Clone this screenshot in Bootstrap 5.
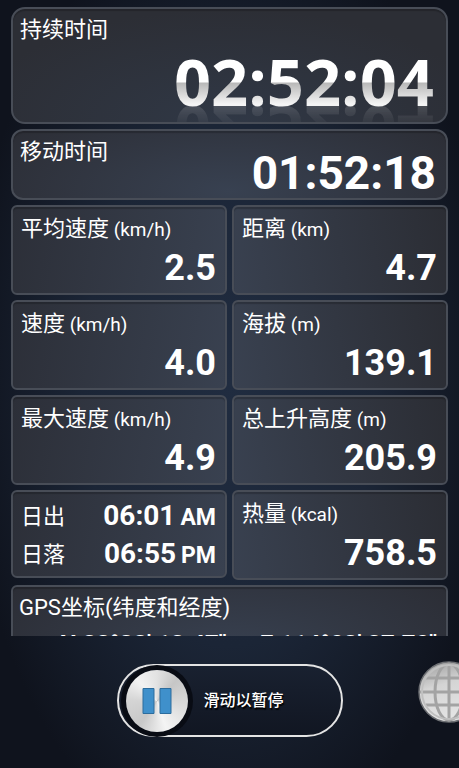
<!DOCTYPE html>
<html lang="zh-CN">
<head>
<meta charset="utf-8">
<meta name="viewport" content="width=device-width, initial-scale=1">
<title>运动记录</title>
<link href="https://cdn.jsdelivr.net/npm/bootstrap@5.3.0/dist/css/bootstrap.min.css" rel="stylesheet">
<style>
body{background:radial-gradient(ellipse 58% 62% at 50% 50%,#202c40 0,#1b2536 55%,#0f131d 100%) #0f131d;color:#fff;font-family:Roboto,"Noto Sans CJK SC",sans-serif}
.readouts{min-height:0;padding:7px 11px 0}
.stats{display:grid;gap:5px;grid-template-columns:1fr 1fr}
.span-all{grid-column:1/-1}
.tile{border:2px solid #484d57;border-radius:6px;background:linear-gradient(100deg,#2c2f38,#394150);box-shadow:inset 0 2px 1px #0003}
.tile-end{background:linear-gradient(260deg,#2b2d34,#394150)}
.tile-wide{background:radial-gradient(ellipse 60% 150% at 50% 90%,#384151,#2c2e36)}
.tile-total{height:117px;border-radius:14px;padding:4px 12px 0 7px;background:radial-gradient(ellipse 60% 100% at 50% 100%,#303846,#2c2e35)}
.tile-moving{min-height:71px;border-radius:12px;padding:4px 10px 0 7px}
.tile-stat{min-height:90px;padding:5px 9px 0 8px}
.tile-sun{height:88px;padding:5px 9px 0 8px}
.tile-gps{padding:4px 6px}
.label{font-size:22px;line-height:33px;white-space:nowrap}
.unit{font-size:19px}
.value{font-size:36px;line-height:44px;font-weight:700;text-align:right}
.moving{font-size:46px;line-height:50px;font-weight:700;padding-top:13px}
.clock{font-family:"Open Sans","Noto Sans",sans-serif;font-size:65px;line-height:75px;font-weight:700;background:linear-gradient(#fff 0,#fff 38px,#b8b8b8 39px,#f4f4f4 60px);-webkit-background-clip:text;background-clip:text;color:transparent;-webkit-box-reflect:below -26px linear-gradient(transparent 50%,#ffffff24 82%)}
.clock-line{margin-top:-2px}
.sun{font-size:28px;line-height:38px;font-weight:700;white-space:nowrap}
.sun-row{height:38px}
.ampm{font-size:23px;line-height:1;margin-left:5px}
.coords{font-size:24px;line-height:28px;font-weight:700;white-space:nowrap;padding:6px 3px 0 0}
footer{min-height:132px;padding-top:28px}
.slider{width:226px;height:73px;padding:0 0 0 7px;border:2px solid #e4e4e4;border-radius:37px;color:#fff;background:linear-gradient(#192130,#111622);font-size:16px;font-weight:500;text-shadow:1px 2px 1px #000}
.knob{width:62px;height:62px;margin-right:16px;border-radius:50%;box-shadow:0 0 0 5px #090c14;background:conic-gradient(#e2e2e2,#c6c6c6 12%,#dedede 30%,#f4f4f4 45%,#c8c8c8 60%,#d4d4d4 75%,#f2f2f2 88%,#e2e2e2)}
.globe{width:64px;height:64px;right:-22px;top:24px}
</style>
</head>
<body class="vh-100 overflow-hidden d-flex flex-column">
<main class="readouts flex-fill overflow-hidden">
<div class="stats">
<section class="tile span-all tile-total overflow-hidden"><div class="label">持续时间</div><div class="clock-line d-flex justify-content-end"><div class="clock">02:52:04</div></div></section>
<section class="tile span-all tile-wide tile-moving d-flex justify-content-between"><div class="label">移动时间</div><div class="moving">01:52:18</div></section>
<section class="tile tile-stat"><div class="label">平均速度<span class="unit"> (km/h)</span></div><div class="value">2.5</div></section>
<section class="tile tile-end tile-stat"><div class="label">距离<span class="unit"> (km)</span></div><div class="value">4.7</div></section>
<section class="tile tile-stat"><div class="label">速度<span class="unit"> (km/h)</span></div><div class="value">4.0</div></section>
<section class="tile tile-end tile-stat"><div class="label">海拔<span class="unit"> (m)</span></div><div class="value">139.1</div></section>
<section class="tile tile-stat"><div class="label">最大速度<span class="unit"> (km/h)</span></div><div class="value">4.9</div></section>
<section class="tile tile-end tile-stat"><div class="label">总上升高度<span class="unit"> (m)</span></div><div class="value">205.9</div></section>
<section class="tile tile-sun">
<div class="sun-row d-flex justify-content-between align-items-center"><span class="label">日出</span><span class="sun">06:01<span class="ampm">AM</span></span></div>
<div class="sun-row d-flex justify-content-between align-items-center"><span class="label">日落</span><span class="sun">06:55<span class="ampm">PM</span></span></div>
</section>
<section class="tile tile-end tile-stat"><div class="label">热量<span class="unit"> (kcal)</span></div><div class="value">758.5</div></section>
<section class="tile span-all tile-wide tile-gps"><div class="label">GPS坐标(纬度和经度)</div>
<div class="row g-0 text-end"><div class="col coords">N 22°32' 12.47"</div><div class="col coords">E 114°03' 27.70"</div></div></section>
</div>
</main>
<footer class="position-relative d-flex justify-content-center align-items-start flex-shrink-0">
<button type="button" class="slider d-flex align-items-center">
<span class="knob d-flex align-items-center justify-content-center flex-shrink-0"><svg width="30" height="26" viewBox="0 0 30 26" aria-hidden="true"><path d="M1 .5h11v25H1zM18 .5h11v25H18z" fill="#3f90cb" stroke="#2c6c9d"/></svg></span>
<span>滑动以暂停</span></button>
<button type="button" class="globe position-absolute btn p-0 border-0 rounded-circle" aria-label="地图">
<svg class="d-block" width="64" height="64" viewBox="0 0 64 64" aria-hidden="true">
<defs><linearGradient id="gl" x1="0" y1="0" x2="0.3" y2="1"><stop offset="0" stop-color="#999"/><stop offset=".45" stop-color="#d4d4d4"/><stop offset="1" stop-color="#e4e4e4"/></linearGradient></defs>
<circle cx="32" cy="32" r="30" fill="url(#gl)" stroke="#6e7074" stroke-width="1.5"/>
<g fill="none" stroke="#a3a3a3" stroke-width="3"><path d="M32 3v58M3 32h58M9 18h46M9 45h46"/><ellipse cx="32" cy="32" rx="14" ry="28"/><circle cx="32" cy="32" r="27" stroke="#c0c0c0" stroke-width="2"/></g></svg></button>
</footer>
</body>
</html>
